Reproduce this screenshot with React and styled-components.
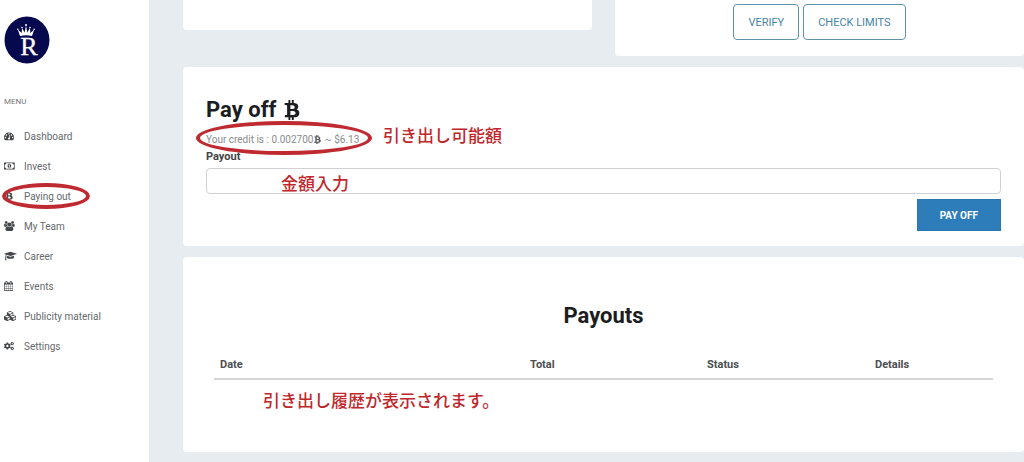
import React, { useState } from "react";
import styled, { createGlobalStyle } from "styled-components";
import { FaBtc, FaCogs } from "react-icons/fa";

const shapes = {
    gauge: {
        width: 1792,
        d: "M384 1152q0-53-37.500-90.500t-90.500-37.500-90.500 37.500-37.500 90.500 37.500 90.500 90.500 37.500 90.500-37.500 37.500-90.500zM576 704q0-53-37.500-90.500t-90.500-37.500-90.500 37.500-37.500 90.500 37.500 90.500 90.500 37.500 90.500-37.500 37.500-90.500zM1004 1185l101-382q6-26-7.500-48.500t-38.500-29.500-48 6.500-30 39.500l-101 382q-60 5-107 43.500t-63 98.500q-20 77 20 146t117 89 146-20 89-117q16-60-6-117t-72-91zM1664 1152q0-53-37.500-90.500t-90.500-37.500-90.500 37.500-37.500 90.500 37.500 90.500 90.500 37.500 90.500-37.500 37.500-90.500zM1024 512q0-53-37.500-90.500t-90.500-37.500-90.500 37.500-37.500 90.500 37.500 90.500 90.500 37.500 90.500-37.500 37.500-90.500zM1472 704q0-53-37.500-90.500t-90.500-37.500-90.500 37.500-37.500 90.500 37.500 90.500 90.500 37.500 90.500-37.500 37.500-90.500zM1792 1152q0 261-141 483-19 29-54 29h-1402q-35 0-54-29-141-221-141-483 0-182 71-348t191-286 286-191 348-71 348 71 286 191 191 286 71 348z",
    },
    money: {
        width: 1920,
        d: "M768 1152h384v-96h-128v-448h-114l-148 137 77 80q42-37 55-57h2v288h-128v96zM1280 896q0 70-21 142t-59.500 134-101.500 101-138 39-138-39-101.500-101-59.500-134-21-142 21-142 59.500-134 101.500-101 138-39 138 39 101.500 101 59.500 134 21 142zM1792 1152v-512q-106 0-181-75t-75-181h-1152q0 106-75 181t-181 75v512q106 0 181 75t75 181h1152q0-106 75-181t181-75zM1920 320v1152q0 26-19 45t-45 19h-1792q-26 0-45-19t-19-45v-1152q0-26 19-45t45-19h1792q26 0 45 19t19 45z",
    },
    users: {
        width: 1920,
        d: "M593 896q-162 5-265 128h-134q-82 0-138-40.500t-56-118.500q0-353 124-353 6 0 43.500 21t97.500 42.500 119 21.500q67 0 133-23-5 37-5 66 0 139 81 256zM1664 1533q0 120-73 189.500t-194 69.500h-874q-121 0-194-69.500t-73-189.500q0-53 3.500-103.500t14-109 26.500-108.500 43-97.500 62-81 85.500-53.500 111.500-20q10 0 43 21.500t73 48 107 48 135 21.500 135-21.500 107-48 73-48 43-21.500q61 0 111.500 20t85.500 53.500 62 81 43 97.500 26.500 108.500 14 109 3.500 103.500zM640 256q0 106-75 181t-181 75-181-75-75-181 75-181 181-75 181 75 75 181zM1344 640q0 159-112.500 271.500t-271.500 112.500-271.500-112.500-112.500-271.500 112.500-271.500 271.500-112.500 271.500 112.500 112.500 271.500zM1920 865q0 78-56 118.500t-138 40.500h-134q-103-123-265-128 81-117 81-256 0-29-5-66 66 23 133 23 59 0 119-21.500t97.500-42.500 43.500-21q124 0 124 353zM1792 256q0 106-75 181t-181 75-181-75-75-181 75-181 181-75 181 75 75 181z",
    },
    cap: {
        width: 2304,
        d: "M1774 836l18 316q4 69-82 128t-235 93.500-323 34.500-323-34.500-235-93.500-82-128l18-316 574 181q22 7 48 7t48-7zM2304 512q0 23-22 31l-1120 352q-4 1-10 1t-10-1l-652-206q-43 34-71 111.500t-34 178.500q63 36 63 109 0 69-58 107l58 433q2 14-8 25-9 11-24 11h-192q-15 0-24-11-10-11-8-25l58-433q-58-38-58-107 0-73 65-111 11-207 98-330l-333-104q-22-8-22-31t22-31l1120-352q4-1 10-1t10 1l1120 352q22 8 22 31z",
    },
    calendar: {
        width: 1664,
        d: "M128 1664h288v-288h-288v288zM480 1664h320v-288h-320v288zM128 1312h288v-320h-288v320zM480 1312h320v-320h-320v320zM128 928h288v-288h-288v288zM864 1664h320v-288h-320v288zM480 928h320v-288h-320v288zM1248 1664h288v-288h-288v288zM864 1312h320v-320h-320v320zM512 448v-288q0-13-9.500-22.500t-22.500-9.500h-64q-13 0-22.500 9.500t-9.500 22.500v288q0 13 9.500 22.500t22.500 9.500h64q13 0 22.500-9.500t9.500-22.500zM1248 1312h288v-320h-288v320zM864 928h320v-288h-320v288zM1248 928h288v-288h-288v288zM1280 448v-288q0-13-9.500-22.500t-22.500-9.500h-64q-13 0-22.500 9.500t-9.500 22.500v288q0 13 9.500 22.500t22.500 9.500h64q13 0 22.500-9.500t9.500-22.500zM1664 384v1280q0 52-38 90t-90 38h-1408q-52 0-90-38t-38-90v-1280q0-52 38-90t90-38h128v-96q0-66 47-113t113-47h64q66 0 113 47t47 113v96h384v-96q0-66 47-113t113-47h64q66 0 113 47t47 113v96h128q52 0 90 38t38 90z",
    },
    cubes: {
        width: 2176,
        d: "M640 1632l384-192v-314l-384 164v342zM576 1178l404-173-404-173-404 173zM1664 1632l384-192v-314l-384 164v342zM1600 1178l404-173-404-173-404 173zM1152 893l384-165v-266l-384 164v267zM1088 518l441-189-441-189-441 189zM2176 1024v416q0 36-19 67t-52 47l-448 224q-25 14-57 14t-57-14l-448-224q-4-2-7-4-2 2-7 4l-448 224q-25 14-57 14t-57-14l-448-224q-33-16-52-47t-19-67v-416q0-38 21.500-70t56.500-48l434-186v-400q0-38 21.500-70t56.500-48l448-192q23-10 50-10t50 10l448 192q35 16 56.500 48t21.500 70v400l434 186q36 16 57 48t21 70z",
    },
};

const Shape = ({ name }) => (
    <svg
        viewBox={`0 0 ${shapes[name].width} 1792`}
        fill="currentColor"
        fillRule="evenodd"
        aria-hidden="true"
    >
        <path d={shapes[name].d} />
    </svg>
);

const menu = [
    { label: "Dashboard", icon: <Shape name="gauge" /> },
    { label: "Invest", icon: <Shape name="money" /> },
    { label: "Paying out", icon: <FaBtc />, marked: true },
    { label: "My Team", icon: <Shape name="users" /> },
    { label: "Career", icon: <Shape name="cap" /> },
    { label: "Events", icon: <Shape name="calendar" /> },
    { label: "Publicity material", icon: <Shape name="cubes" /> },
    { label: "Settings", icon: <FaCogs /> },
];

const Logo = () => (
    <LogoLink href="#" aria-label="Home">
        <svg width="46" height="48" viewBox="0 0 46 48">
            <ellipse cx="23" cy="24" rx="22.5" ry="23.5" fill="#07094f" />
            <path
                d="M16 20 13.800 13.500l3.900 3.500.3-5 2.700 4.500L22 9.500l1.300 7 2.700-4.500.3 5 3.900-3.500L28 20q-6-1.500-12 0z"
                fill="#fff"
            />
            <g fill="#fff">
                <circle cx="13.800" cy="13.200" r="0.800" />
                <circle cx="18" cy="11.500" r="0.800" />
                <circle cx="22" cy="9" r="1" />
                <circle cx="26" cy="11.500" r="0.800" />
                <circle cx="30.200" cy="13.200" r="0.800" />
            </g>
            <text
                x="25"
                y="39"
                textAnchor="middle"
                fill="#fff"
                stroke="#fff"
                strokeWidth="0.300"
                fontFamily="'Liberation Serif', serif"
                fontSize="26"
            >
                R
            </text>
        </svg>
    </LogoLink>
);

const App = () => {
    const [amount, setAmount] = useState("");

    return (
        <Page>
            <GlobalStyle />
            <Sidebar>
                <Logo />
                <MenuTitle>MENU</MenuTitle>
                <Menu>
                    {menu.map(({ label, icon, marked }) => (
                        <li key={label}>
                            <MenuLink href="#">
                                <MenuIcon>{icon}</MenuIcon>
                                {label}
                                {marked && <MenuRing />}
                            </MenuLink>
                        </li>
                    ))}
                </Menu>
            </Sidebar>
            <Main>
                <TopRow>
                    <EmptyCard />
                    <ActionsCard>
                        <OutlineButton type="button">VERIFY</OutlineButton>
                        <OutlineButton type="button">CHECK LIMITS</OutlineButton>
                    </ActionsCard>
                </TopRow>

                <PayoffCard>
                    <Title>
                        Pay off <FaBtc />
                    </Title>
                    <Credit>
                        Your credit is : 0.002700
                        <FaBtc /> ~ $6.13
                        <CreditRing />
                        <CreditNote>引き出し可能額</CreditNote>
                    </Credit>
                    <Label htmlFor="payout">Payout</Label>
                    <Field>
                        <Input
                            id="payout"
                            value={amount}
                            onChange={(e) => setAmount(e.target.value)}
                        />
                        <FieldNote>金額入力</FieldNote>
                    </Field>
                    <PayButton type="button">PAY OFF</PayButton>
                </PayoffCard>

                <PayoutsCard>
                    <Title $center>Payouts</Title>
                    <Table>
                        <thead>
                            <tr>
                                <Th $width="310px">Date</Th>
                                <Th $width="177px">Total</Th>
                                <Th $width="168px">Status</Th>
                                <Th $width="124px">Details</Th>
                            </tr>
                        </thead>
                    </Table>
                    <TableNote>引き出し履歴が表示されます。</TableNote>
                </PayoutsCard>
            </Main>
        </Page>
    );
};

const GlobalStyle = createGlobalStyle`
    * {
        box-sizing: border-box;
    }

    body {
        margin: 0;
        background: #e7ecf0;
        color: #55585b;
        font-family: Roboto, "Noto Sans CJK JP", sans-serif;
        font-size: 10px;
    }

    button, input {
        font-family: inherit;
    }
`;

const Page = styled.div`
    display: flex;
    min-height: 100vh;
`;

const Sidebar = styled.aside`
    width: 149px;
    flex-shrink: 0;
    padding: 16px 4px;
    background: #fff;
`;

const LogoLink = styled.a`
    display: block;
    height: 48px;

    svg {
        display: block;
    }
`;

const MenuTitle = styled.div`
    margin: 32px 0 13px;
    font-size: 8px;
    line-height: 12px;
    color: #77797b;
`;

const Menu = styled.ul`
    margin: 0;
    padding: 0;
    list-style: none;
`;

const MenuLink = styled.a`
    position: relative;
    display: flex;
    align-items: center;
    height: 30px;
    color: #66696c;
    font-size: 10px;
    text-decoration: none;
`;

const MenuIcon = styled.span`
    display: flex;
    width: 20px;
    color: #45484b;

    svg {
        height: 10px;
        width: auto;
    }
`;

const Ring = styled.span`
    position: absolute;
    border: 4px solid #bf2a30;
    border-radius: 50%;
    pointer-events: none;
`;

const MenuRing = styled(Ring)`
    left: -2px;
    top: 2px;
    width: 88px;
    height: 26px;
`;

const Main = styled.main`
    flex: 1;
    min-width: 0;
    padding: 0 0 10px 34px;
`;

const TopRow = styled.div`
    display: grid;
    grid-template-columns: 1fr 1fr;
    align-items: start;
    gap: 23px;
    margin-bottom: 11px;
`;

const Card = styled.section`
    background: #fff;
    border-radius: 4px;
`;

const EmptyCard = styled(Card)`
    height: 30px;
    border-radius: 0 0 4px 4px;
`;

const ActionsCard = styled(Card)`
    display: flex;
    justify-content: center;
    gap: 4px;
    padding: 4px 0 16px;
    border-radius: 0 0 4px 4px;
`;

const OutlineButton = styled.button`
    height: 36px;
    padding: 0 14px;
    border: 1px solid #5f93ab;
    border-radius: 4px;
    background: #fff;
    color: #4684a6;
    font-size: 11px;
    cursor: pointer;
`;

const PayoffCard = styled(Card)`
    display: flex;
    flex-direction: column;
    margin-bottom: 11px;
    padding: 28px 23px 15px;
`;

const Title = styled.h2`
    margin: 0;
    color: #1c1d1f;
    font-size: 22px;
    font-weight: 700;
    line-height: 30px;
    text-align: ${(props) => (props.$center ? "center" : "left")};

    svg {
        height: 20px;
        width: auto;
        vertical-align: -3px;
    }
`;

const Credit = styled.p`
    position: relative;
    align-self: flex-start;
    margin: 6px 0 0;
    color: #8a8c8e;
    font-size: 10px;
    line-height: 18px;

    svg {
        height: 9px;
        width: auto;
        color: #55585b;
        vertical-align: -1px;
    }
`;

const CreditRing = styled(Ring)`
    left: -10px;
    top: -10px;
    width: 176px;
    height: 34px;
`;

const Note = styled.span`
    color: #c0272d;
    font-family: "Noto Sans CJK JP", sans-serif;
    font-size: 17px;
    font-weight: 500;
    line-height: 24px;
    white-space: nowrap;
    pointer-events: none;
`;

const CreditNote = styled(Note)`
    position: absolute;
    left: 177px;
    top: -8px;
`;

const Label = styled.label`
    margin-bottom: 3px;
    color: #3f4245;
    font-size: 11px;
    font-weight: 700;
    line-height: 16px;
`;

const Field = styled.div`
    position: relative;
    display: flex;
`;

const Input = styled.input`
    flex: 1;
    height: 26px;
    padding: 0 10px;
    border: 1px solid #cfd1d3;
    border-radius: 4px;
    background: #fff;
    color: #3f4245;
    outline: none;
`;

const FieldNote = styled(Note)`
    position: absolute;
    left: 75px;
    top: 3px;
`;

const PayButton = styled.button`
    align-self: flex-end;
    height: 32px;
    margin-top: 5px;
    padding: 0 22px;
    border: 1px solid #2a76b0;
    background: #2d7dbb;
    color: #fff;
    font-size: 10px;
    font-weight: 700;
    cursor: pointer;
`;

const PayoutsCard = styled(Card)`
    padding: 44px 31px 40px;
`;

const Table = styled.table`
    width: 100%;
    margin: 20px 0 8px;
    border-collapse: collapse;
    table-layout: fixed;
`;

const Th = styled.th`
    width: ${(props) => props.$width};
    height: 28px;
    padding: 0 6px;
    border-bottom: 2px solid #d3d5d7;
    color: #4b4e51;
    font-size: 11px;
    font-weight: 700;
    text-align: left;
`;

const TableNote = styled(Note)`
    display: block;
    padding-left: 49px;
`;

export default App;
